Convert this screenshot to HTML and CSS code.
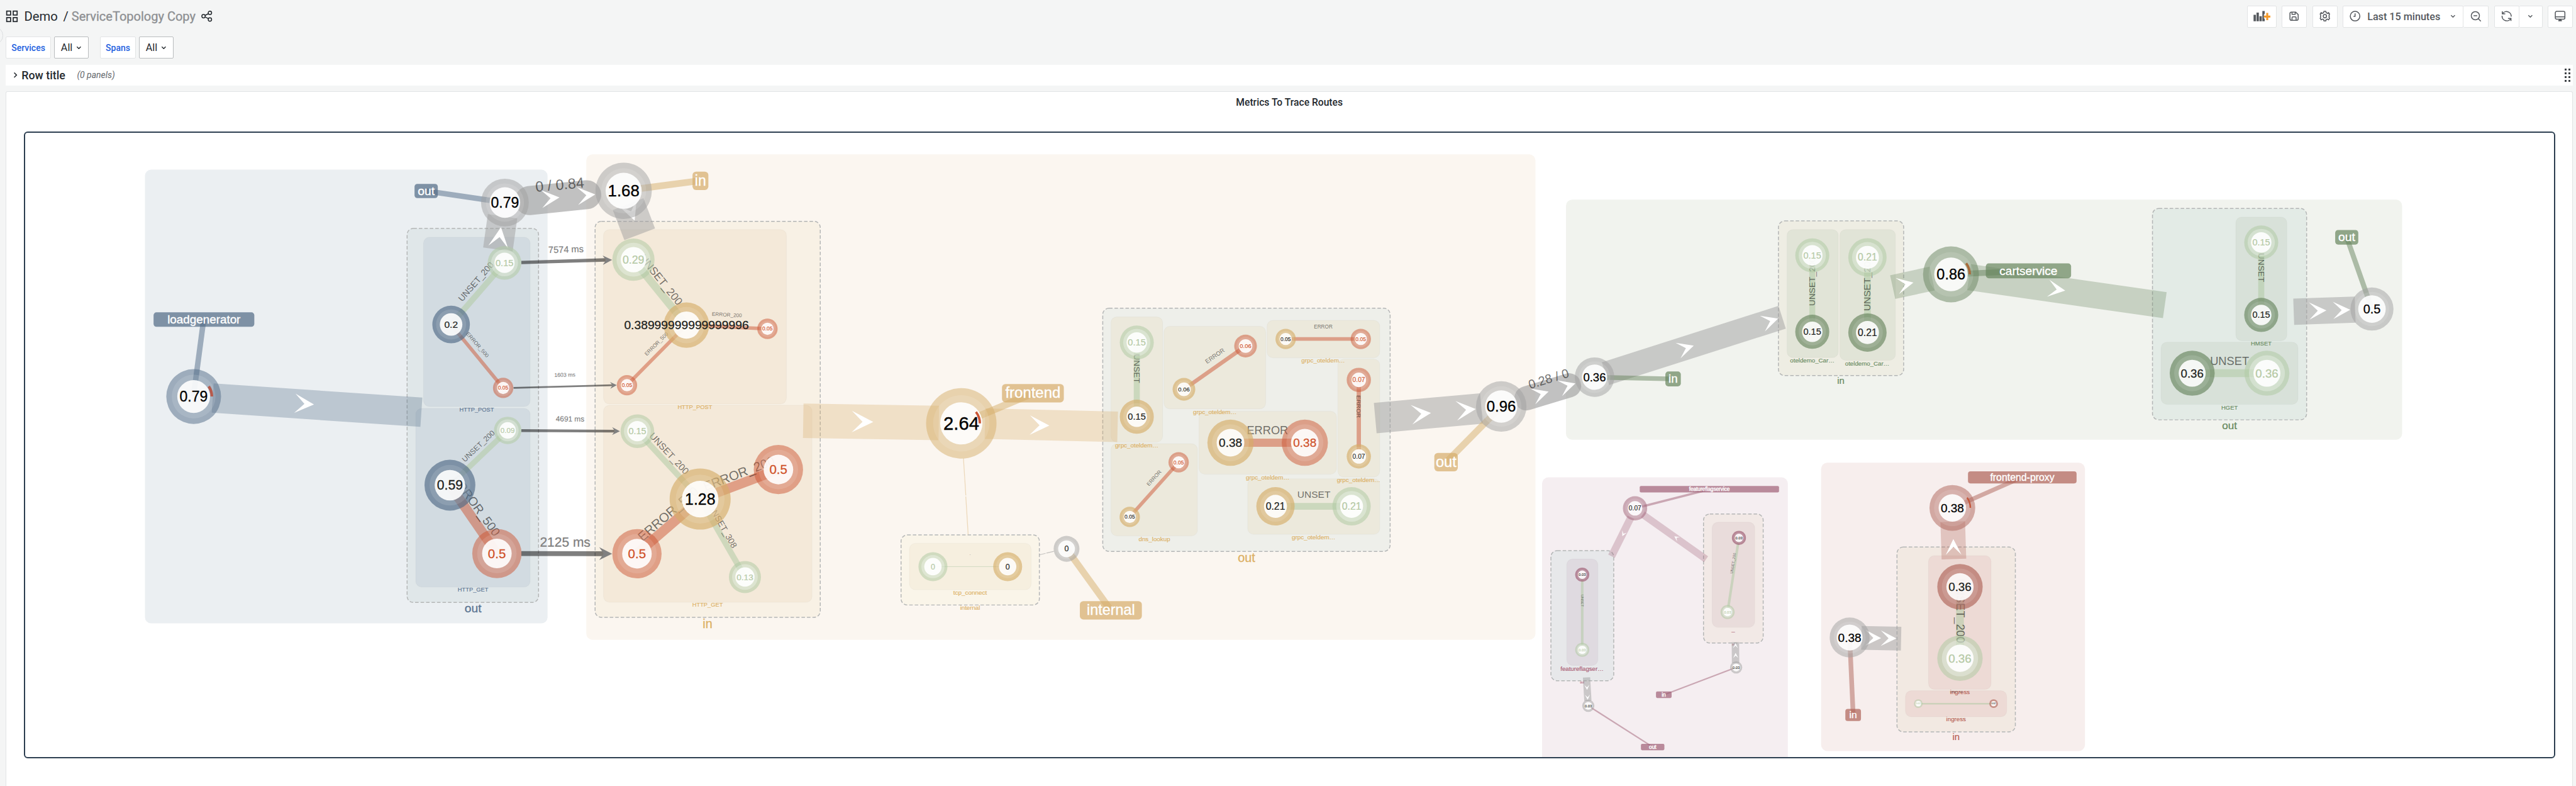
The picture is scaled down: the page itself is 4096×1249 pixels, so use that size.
FILE: index.html
```html
<!DOCTYPE html>
<html lang="en">
<head>
<meta charset="utf-8">
<title>Demo / ServiceTopology Copy</title>
<link rel="stylesheet" href="styles.css">
</head>
<body>
<div class="page">
  <span class="drawer-handle"></span>
  <header class="topbar">
    <svg class="icon icon-apps" viewBox="0 0 24 24"><rect x="2" y="2" width="7.5" height="7.5"/><rect x="14.5" y="2" width="7.5" height="7.5"/><rect x="2" y="14.5" width="7.5" height="7.5"/><rect x="14.5" y="14.5" width="7.5" height="7.5"/></svg>
    <span class="crumb">Demo</span>
    <span class="crumb-sep">/</span>
    <span class="crumb crumb-current">ServiceTopology Copy</span>
    <svg class="icon icon-share" viewBox="0 0 24 24"><circle cx="5" cy="12" r="3.7"/><circle cx="19" cy="4.700" r="3.7"/><circle cx="19" cy="19.300" r="3.7"/><path d="M8.300 10.300l7.400-3.800M8.300 13.700l7.400 3.800"/></svg>
    <div class="tools">
      <button class="tool tool-add"><svg class="icon icon-add" viewBox="0 0 44 28"><path class="bars" d="M0.5 27V10.5h6V27zM8 27V5h6v22zM15.500 27V14h6v13zM23 27V1h6v8h-2v11h2v7z"/><path class="plus" d="M33 5.500h5v7h6v5h-6v6.500h-5v-6.500h-6v-5h6z"/></svg></button>
      <button class="tool"><svg class="icon" viewBox="0 0 24 24"><path d="M3 6a3 3 0 0 1 3-3h9.500L21 8.500V18a3 3 0 0 1-3 3H6a3 3 0 0 1-3-3zM7.500 3v5h7V3M7.500 21v-5.500a2 2 0 0 1 2-2h5a2 2 0 0 1 2 2V21"/></svg></button>
      <button class="tool"><svg class="icon" viewBox="0 0 24 24"><path d="M10 1.500h4l.8 3 2.600 1.100 2.700-1.500 2.200 3.200-1.300 2.600.7 2.100-.7 2.200 1.300 2.500-2.200 3.200-2.700-1.500-2.600 1.100-.8 3h-4l-.8-3-2.600-1.100-2.700 1.500-2.200-3.200L3 14.200 2.300 12 3 9.900 1.700 7.300l2.200-3.200 2.700 1.500 2.600-1.100z"/><circle cx="12" cy="12" r="3.600"/></svg></button>
      <div class="group">
        <button class="tool tool-time"><svg class="icon" viewBox="0 0 24 24"><circle cx="12" cy="12" r="10.500"/><path d="M12 6v6.500H8.500"/></svg><span>Last 15 minutes</span><svg class="icon caret" viewBox="0 0 14 9"><path d="M2 2l5 5 5-5"/></svg></button>
        <button class="tool"><svg class="icon" viewBox="0 0 24 24"><circle cx="11" cy="11" r="9"/><path d="M7 11h8M17.500 17.500L23 23"/></svg></button>
      </div>
      <div class="group">
        <button class="tool"><svg class="icon" viewBox="0 0 24 24"><path d="M2.500 1.500v5.500H9M2.800 7A10.300 10.300 0 0 1 22 13M21.500 22.500V17H15M21.200 17A10.300 10.300 0 0 1 2 11"/></svg></button>
        <button class="tool tool-narrow"><svg class="icon caret" viewBox="0 0 14 9"><path d="M2 2l5 5 5-5"/></svg></button>
      </div>
      <button class="tool"><svg class="icon" viewBox="0 0 24 24"><rect x="1.500" y="1.500" width="21" height="17" rx="3"/><path d="M1.500 13.500h21M10 18.500v2h4v-2M8 22h8"/></svg></button>
    </div>
  </header>

  <div class="variables">
    <div class="variable"><label class="var-name var-services">Services</label><button class="var-value">All<svg class="icon caret" viewBox="0 0 14 9"><path d="M2 2l5 5 5-5"/></svg></button></div>
    <div class="variable"><label class="var-name var-spans">Spans</label><button class="var-value">All<svg class="icon caret" viewBox="0 0 14 9"><path d="M2 2l5 5 5-5"/></svg></button></div>
  </div>

  <div class="dash-row">
    <svg class="icon row-caret" viewBox="0 0 9 14"><path d="M2 2l5 5-5 5"/></svg>
    <span class="row-title">Row title</span>
    <span class="row-count">(0 panels)</span>
    <span class="grip"><i></i><i></i><i></i><i></i><i></i><i></i><i></i><i></i></span>
  </div>

  <section class="panel">
    <h2 class="panel-title">Metrics To Trace Routes</h2>
    <div class="stage"><svg id="graph" class="graph" viewBox="63.800 338.800 6463.400 1594.600" preserveAspectRatio="none"></svg></div>
  </section>
</div>
<script src="graph.js"></script>
</body>
</html>
```
FILE: styles.css
```css
html { font-size: 6.2212px; }
* { box-sizing: border-box; }
body {
  margin: 0;
  background: #f4f5f5;
  color: #24292e;
  font-family: Roboto, "Liberation Sans", sans-serif;
}
.page {
  height: 1249px;
  overflow: hidden;
  position: relative;
  display: flex;
  flex-direction: column;
  padding: 1.4rem .8rem 0 1.5rem;
}
button { font: inherit; color: inherit; margin: 0; }
.drawer-handle {
  position: absolute;
  left: -3.8rem;
  top: 6.8rem;
  width: 4.6rem;
  height: 4.6rem;
  border: 1px solid #dcdee0;
  border-radius: 50%;
}
.icon { fill: none; stroke: currentColor; stroke-width: 2.1; flex: none; width: 2.8rem; height: 2.8rem; }
.caret { width: 1.4rem; height: .9rem; stroke-width: 2.2; }

.topbar { display: flex; align-items: center; height: 5.6rem; flex: none; }
.icon-apps { width: 3.2rem; height: 3.2rem; margin-right: 1.5rem; }
.crumb { font-size: 3.25rem; line-height: 5.6rem; white-space: nowrap; }
.crumb-sep { font-size: 3.25rem; margin: 0 .8rem 0 1.4rem; }
.crumb-current { font-size: 3.22rem; color: #8e9093; -webkit-text-stroke: .35px #8e9093; }
.icon-share { margin-left: 1.5rem; }
.tools { margin-left: auto; display: flex; gap: 1.4rem; color: #55595e; }
.tool {
  display: flex;
  align-items: center;
  justify-content: center;
  width: 6.4rem;
  height: 5.6rem;
  padding: 0;
  background: #fff;
  border: 1px solid #e2e4e5;
  border-radius: 2px;
}
.tool-add { width: 7.4rem; }
.icon-add { width: 4.4rem; height: 2.8rem; stroke: none; }
.bars { fill: #55595e; }
.plus { fill: #f59a2a; }
.group { display: flex; }
.group .tool + .tool { border-left: 0; }
.tool-time {
  width: 30.9rem;
  justify-content: flex-start;
  padding-left: 1.6rem;
  font-size: 2.6rem;
  font-weight: 500;
}
.tool-time span { margin: 0 2.5rem 0 1.7rem; white-space: nowrap; }
.tool-narrow { width: 5.9rem; }

.variables { display: flex; gap: 3rem; margin-top: 2.3rem; height: 5.7rem; flex: none; }
.variable { display: flex; gap: .8rem; }
.var-name, .var-value {
  display: flex;
  align-items: center;
  justify-content: center;
  padding: 0;
  background: #fff;
  border: 1px solid #e2e4e5;
  border-radius: 2px;
}
.var-name { font-size: 2.25rem; font-weight: 500; color: #1f62e0; }
.var-services { width: 11.5rem; }
.var-spans { width: 9.1rem; }
.var-value { border-color: #b9bcbe; font-size: 2.6rem; gap: .9rem; width: 8.8rem; }

.dash-row {
  display: flex;
  align-items: center;
  height: 5.4rem;
  margin-top: 1.5rem;
  padding: 0 .6rem 0 1.900rem;
  background: #fff;
  flex: none;
}
.row-caret { width: 1.1rem; height: 1.700rem; margin-right: 1rem; }
.row-title { font-size: 2.87rem; font-weight: 500; }
.row-count { margin-left: 3rem; font-size: 2.25rem; font-style: italic; color: #63676b; }
.grip { margin-left: auto; display: grid; grid-template-columns: .6rem .6rem; gap: .45rem .35rem; }
.grip i { width: .6rem; height: .5rem; background: #3f4347; }

.panel {
  flex: 1;
  margin-top: 1.4rem;
  background: #fff;
  border: 1px solid #e2e4e5;
  border-bottom: 0;
  border-radius: 3px 3px 0 0;
  padding: 0 4.4rem;
}
.panel-title {
  margin: 0 0 4.5rem;
  height: 5.6rem;
  line-height: 5.6rem;
  text-align: center;
  font-size: 2.52rem;
  font-weight: 500;
}
.stage {
  height: 160.1rem;
  border: 2px solid #2c3e50;
  border-radius: 6px;
  overflow: hidden;
}
.graph {
  display: block;
  width: 100%;
  height: 100%;
  font-family: "Liberation Sans", Arial, sans-serif;
}
.dashed { stroke: #b4b6b6; stroke-width: 2.4; stroke-dasharray: 9 5; }
.op { stroke: rgba(0, 0, 0, .025); stroke-width: 2; }
.edge-label { fill: #000; fill-opacity: .55; }
.chevron { fill: #fff; }
.flow { stroke: #000; stroke-opacity: .5; }
.flow-head { fill: #808080; }
```
FILE: graph.js
```javascript
const svg = document.getElementById('graph');
const NS = 'http://www.w3.org/2000/svg';

const C = {
  load: '#506a85', front: '#d6ad69', cart: '#67845d', flag: '#a06076',
  proxy: '#ae6257', ok: '#b0caa4', err: '#cc5533', io: '#a0a0a0'
};
const TEXT = {
  load: '#5a7391', front: '#dcb064', cart: '#67895d', flag: '#a8566f',
  proxy: '#b75f54', ok: '#b5c9a5', err: '#d0522a'
};

function el(name, attrs, text) {
  const e = document.createElementNS(NS, name);
  for (const k in attrs) e.setAttribute(k, attrs[k]);
  if (text !== undefined) e.textContent = text;
  svg.appendChild(e);
  return e;
}
function rect(x, y, x2, y2, r, fill, cls) {
  el('rect', { x, y, width: x2 - x, height: y2 - y, rx: r, fill, class: cls || '' });
}
function text(x, y, size, str, attrs) {
  const weight = attrs.fill ? { stroke: attrs.fill, 'stroke-width': size * .014 } : {};
  el('text', Object.assign({ x, y, dy: '.35em', 'font-size': size, 'text-anchor': 'middle' }, weight, attrs), str);
}
function line(x1, y1, x2, y2, w, c, o, cap) {
  el('line', { x1, y1, x2, y2, stroke: C[c] || c, 'stroke-width': w, 'stroke-opacity': o, 'stroke-linecap': cap || 'butt' });
}
function chevron(x, y, l, deg) {
  el('path', { class: 'chevron', d: `M0 0L${-l} ${-l / 2}L${-l / 2} 0L${-l} ${l / 2}Z`, transform: `translate(${x} ${y}) rotate(${deg})` });
}

/* Services: x1, y1, x2, y2, fill */
[
  [370, 433, 1399, 1592, '#ebeff2'],
  [1498, 394, 3924, 1634, '#fbf6f0'],
  [4002, 509.5, 6139, 1123, '#f1f3ee'],
  [3941, 1219, 4569, 1950, '#f5eef1'],
  [4654, 1181.5, 5328.5, 1918, '#f7eeed']
].forEach(b => rect(b[0], b[1], b[2], b[3], 16, b[4]));

/* Direction groups */
[
  [1040, 583, 1376, 1538.5, '#e0e7e9'],
  [1520.5, 565, 2096, 1576.5, '#f8f1e5'],
  [2302.5, 1366, 2656, 1545, '#faf5e9'],
  [2818, 787, 3552.5, 1408, '#eeefea'],
  [4545, 564, 4865, 959, '#eeede3'],
  [5501, 532, 5895, 1072, '#e3ebe6'],
  [3963.5, 1406, 4124, 1738.5, '#e7e8ea'],
  [4353.5, 1312.5, 4506, 1642, '#f2e9e6'],
  [4848, 1397, 5150.5, 1869, '#f2e9e2']
].forEach(b => rect(b[0], b[1], b[2], b[3], 16, b[4], 'dashed'));

/* Operations */
[
  [1082, 605.5, 1354.5, 1038, '#d2dbe1'], [1062, 1043, 1354.5, 1499, '#d2dbe1'],
  [1542, 586, 2009.5, 1031.5, '#f4e9d9'], [1542, 1035, 2075, 1538, '#f4e9d9'],
  [2324, 1387.5, 2635, 1506, '#f6efdf'],
  [2839, 809, 2971, 1129, '#ece9dc'], [2974.5, 833, 3234.5, 1044, '#ece9dc'],
  [3238, 818, 3526, 913.5, '#ece9dc'], [3419, 917, 3526, 1218, '#ece9dc'],
  [3064, 1050, 3415.5, 1211, '#ece9dc'], [2839, 1133, 3060, 1368.5, '#ece9dc'],
  [3188.5, 1222.5, 3526, 1364.5, '#ece9dc'],
  [4567, 586, 4698, 913, '#e1e4d7'], [4702, 586, 4844, 920, '#e1e4d7'],
  [5714, 554, 5844.5, 870, '#d8e1d9'], [5523, 873.5, 5873, 1032.5, '#d8e1d9'],
  [4004, 1427.5, 4083.5, 1699.5, '#dfdae0'], [4375.5, 1333.5, 4484.5, 1602, '#e9dcdb'],
  [4928.5, 1419, 5088.5, 1760.5, '#eddad5'], [4869.5, 1764, 5128.5, 1830.5, '#eddad5']
].forEach(b => rect(b[0], b[1], b[2], b[3], 15, b[4], 'op'));

/* Captions: x, y, size, text, colour */
[
  [1218, 1046, 15, 'HTTP_POST', 'load'], [1208.5, 1506, 15, 'HTTP_GET', 'load'], [1208.5, 1553.5, 31, 'out', 'load'],
  [1775.5, 1039, 15, 'HTTP_POST', 'front'], [1808, 1544.5, 15, 'HTTP_GET', 'front'], [1808, 1593, 32, 'in', 'front'],
  [2479, 1513, 16, 'tcp_connect', 'front'], [2479, 1552.5, 15.6, 'internal', 'front'],
  [2905, 1137, 15.8, 'grpc_oteldem…', 'front'], [3104.5, 1052, 15.8, 'grpc_oteldem…', 'front'],
  [3381.5, 920.5, 15.8, 'grpc_oteldem…', 'front'], [3472, 1226, 15.8, 'grpc_oteldem…', 'front'],
  [3239.5, 1218.500, 15.8, 'grpc_oteldem…', 'front'], [3357, 1371.5, 15.8, 'grpc_oteldem…', 'front'],
  [2950, 1376, 15.8, 'dns_lookup', 'front'], [3185.5, 1424, 32, 'out', 'front'],
  [4631.5, 920, 15.6, 'oteldemo_Car…', 'cart'], [4772, 927.5, 15.6, 'oteldemo_Car…', 'cart'], [4704.5, 971, 24, 'in', 'cart'],
  [5779, 877.5, 15.2, 'HMSET', 'cart'], [5698, 1040.500, 15.2, 'HGET', 'cart'], [5698, 1086, 27.5, 'out', 'cart'],
  [4043, 1707, 15.5, 'featureflagser…', 'flag'], [4043.5, 1742.5, 7.8, 'out', 'flag'],
  [4429.5, 1606, 15.5, '_', 'flag'], [4429.5, 1645.5, 7.8, 'in', 'flag'],
  [5009, 1767.5, 15.7, 'ingress', 'proxy'], [4999, 1837, 15.7, 'ingress', 'proxy'], [4999, 1881, 24, 'in', 'proxy']
].forEach(t => text(t[0], t[1], t[2], t[3], { fill: TEXT[t[4]] }));

/* Traffic bands */
line(543, 1016.5, 1076.5, 1052.5, 75, 'load', .3);
line(1272, 637, 1284, 552, 76, 'io', .5);
line(1605, 521, 1634.5, 598, 84, 'io', .5);
line(1352, 512, 1499, 497, 74, 'io', .65, 'round');
line(2052.5, 1074.5, 2399, 1080, 88, 'front', .3);
line(2517, 1082, 2856, 1090, 78, 'front', .3);
line(3514.5, 1067.5, 3786, 1043, 78, 'io', .5);
line(3901, 1017, 4010, 984, 62, 'io', .65, 'round');
line(4103, 954, 4554.5, 810, 61, 'io', .5);
line(4837, 733, 4938, 711, 62, 'cart', .3);
line(5032, 707.5, 5532.5, 779, 67, 'cart', .3);
line(5862, 796, 6019, 790.5, 67, 'io', .5);
line(4168, 1321, 4118.5, 1420.5, 19, 'flag', .3);
line(4198.5, 1314, 4360, 1428, 18, 'flag', .3);
line(4054.500, 1730, 4058, 1790, 18.5, 'io', .5);
line(4435.5, 1693.5, 4435, 1640, 19, 'io', .5);
line(4993.5, 1427.5, 4990.5, 1332, 63, 'proxy', .3);
line(4757, 1629, 4858.5, 1631, 61, 'io', .5);

/* Leader lines to the name tags */
line(494, 1012, 520, 816, 14, 'load', .5);
line(1290, 517, 1089, 487.5, 14, 'load', .5);
line(1593, 487, 1790, 461, 17, 'front', .5);
line(2457, 1081, 2640, 1004, 18, 'front', .5);
line(2725.5, 1401.5, 2838.5, 1558, 17, 'front', .5);
line(3836.5, 1038, 3696, 1180, 17, 'front', .5);
line(4075, 963, 4276, 967.5, 12, 'cart', .5);
line(4986, 700.5, 5184, 691.5, 15, 'cart', .5);
line(6062, 789, 5997.5, 606, 13, 'cart', .5);
line(4178.500, 1298, 4368.5, 1249.5, 5.500, 'flag', .5);
line(4437, 1704.500, 4252, 1774.5, 3.5, 'flag', .5);
line(4059, 1802.5, 4223.5, 1907.5, 3.5, 'flag', .5);
line(4989.5, 1297, 5168, 1218.5, 11, 'proxy', .5);
line(4727, 1628, 4736, 1825.5, 12, 'proxy', .5);
line(2462, 1170, 2468, 1265, 2, 'front', .4);
line(2468, 1268, 2474, 1365, 2, 'front', .4);
line(2656, 1417, 2672, 1413, 2, 'io', .6);
line(2674, 1412.500, 2693, 1408, 2, 'io', .6);

/* Span links: x1, y1, x2, y2, width, status */
[
  [1152, 828.5, 1289, 671, 15, 'ok'], [1152, 828.5, 1285.5, 990.5, 9, 'err'],
  [1149.5, 1239, 1297, 1099, 14, 'ok'], [1149.5, 1239, 1269.5, 1413.5, 25, 'err'],
  [1618.5, 663, 1754, 830, 20, 'ok'], [1754, 830, 1961, 839.5, 9, 'err'], [1754, 830, 1602, 983.5, 9, 'err'],
  [1628.5, 1101, 1789, 1274.5, 15, 'ok'], [1789, 1274.5, 1989, 1199, 25, 'err'],
  [1789, 1274.5, 1627.5, 1414, 25, 'err'], [1789, 1274.5, 1903.5, 1473.5, 15, 'ok'],
  [2384, 1447, 2575, 1447, 1.5, 'ok'],
  [2905, 874.5, 2905, 1064, 15.5, 'ok'], [3025.5, 994, 3183, 883.5, 10, 'err'],
  [3285.5, 865.5, 3477.5, 865.5, 9, 'err'], [3472.500, 970, 3472.500, 1165.5, 11, 'err'],
  [3144.5, 1130.5, 3334.5, 1130.5, 21, 'err'], [3012, 1180.5, 2887, 1320, 9, 'err'],
  [3259.500, 1293, 3454, 1293, 17, 'ok'],
  [4631.5, 652, 4631.5, 847, 15, 'ok'], [4772.5, 657, 4772.5, 849, 17, 'ok'],
  [5779, 619, 5779, 804, 15.5, 'ok'], [5602.500, 953, 5793.500, 953, 20, 'ok'],
  [4043.5, 1467.5, 4043.5, 1659.5, 6.500, 'ok'], [4444, 1373.5, 4415, 1563, 6.500, 'ok'],
  [5009, 1498.5, 5009, 1681, 20, 'ok'], [4902.5, 1797, 5095, 1797, 4, 'ok']
].forEach(l => line(l[0], l[1], l[2], l[3], l[4], l[5], l[5] === 'ok' ? .55 : .5));

/* Link labels: x, y, size, angle, text */
[
  [1216, 719, 22.3, -49, 'UNSET_200'], [1220, 880, 13.8, 49, 'ERROR_500'],
  [1222, 1139, 19, -43.5, 'UNSET_200'], [1217, 1291, 31.5, 54, 'ERROR_500'],
  [1689, 714, 28, 51, 'UNSET_200'], [1857.5, 803.5, 13.2, 2.7, 'ERROR_200'], [1677, 878, 13.5, -45, 'ERROR_500'],
  [1710, 1158, 24, 47, 'UNSET_200'], [1888, 1209, 33, -20.7, 'ERROR_200'],
  [1707, 1312, 33, -40.8, 'ERROR_500'], [1847, 1344, 22, 60, 'UNSET_308'],
  [2479, 1417, 8, 0, '-'],
  [2906, 941, 22, 90, 'UNSET'], [3104.5, 908.5, 15.5, -35, 'ERROR'], [3381.5, 834.5, 13.2, 0, 'ERROR'],
  [3473, 1038, 16, 90, 'ERROR'], [3239, 1099, 29.3, 0, 'ERROR'], [2949, 1220.5, 13.5, -48, 'ERROR'],
  [3357.5, 1262.500, 25, 0, 'UNSET'],
  [4631, 719, 22, -90, 'UNSET_200'], [4772, 724, 25, -90, 'UNSET_200'],
  [5780, 683, 22, 90, 'UNSET'], [5698, 921, 29.4, 0, 'UNSET'],
  [4044, 1534, 9.2, 90, 'UNSET'], [4429, 1438.5, 9.5, -81, 'UNSET_200'],
  [5011, 1560, 29.3, 90, 'UNSET_200'], [4999.5, 1767, 5.7, 0, 'UNSET_200'],
  [1430, 471, 37.5, -5, '0 / 0.84'], [3957.5, 967, 32, -17, '0.28 / 0']
].forEach(t => text(0, 0, t[2], t[4], { class: 'edge-label', transform: `translate(${t[0]} ${t[1]}) rotate(${t[3]})` }));

/* Direction chevrons: tip x, tip y, length, angle */
[
  [802, 1033, 49, 4], [1280, 580, 51, -82], [1429.5, 504, 46, -5], [1521, 496.5, 46, -5], [1621.5, 563, 50, 69],
  [2231.5, 1077.5, 55, 1], [2681.5, 1086.5, 50, 1.3],
  [3657, 1054.5, 50, -5], [3771.5, 1044.5, 50, -5], [3957.5, 1000, 42, -17], [4026, 979, 42, -17],
  [4328.5, 882.5, 42, -17.5], [4544, 813.500, 42, -17.5], [4890, 721.5, 42, -12], [5278, 742, 44, 8],
  [5945.5, 792.5, 44, -2], [6006.5, 791, 44, -2],
  [4146, 1369, 13, 116], [4279, 1369.5, 13, -145],
  [4056, 1762, 13, 87], [4057.5, 1787, 13, 87], [4435, 1642.5, 13, -91], [4435.5, 1667.5, 13, -91],
  [4992, 1376.5, 40, -91], [4807.5, 1629.5, 40, 1], [4846.5, 1630.5, 40, 1]
].forEach(c => chevron(...c));

/* Calls between services: x1, y1, x2, y2, width, head length, label x, label y, size, label */
[
  [1332, 670, 1564, 663.500, 8.5, 24, 1446, 636.500, 23.5, '7574 ms'],
  [1312, 990.5, 1576, 983.5, 4.500, 17, 1443, 957, 14, '1603 ms'],
  [1332, 1099.5, 1584, 1101, 7, 20, 1456.5, 1069.500, 19, '4691 ms'],
  [1332, 1413.5, 1564, 1414, 12.5, 33, 1444, 1384, 33.7, '2125 ms']
].forEach(([x1, y1, x2, y2, w, h, lx, ly, size, label]) => {
  const a = Math.atan2(y2 - y1, x2 - x1) * 180 / Math.PI;
  el('line', { class: 'flow', x1, y1, x2: x2 - h * .65, y2, 'stroke-width': w });
  el('path', { class: 'flow-head', d: `M0 0L${-h} ${-h / 2}L${-h * .65} 0L${-h} ${h / 2}Z`, transform: `translate(${x2} ${y2}) rotate(${a})` });
  text(0, 0, size, label, { fill: '#808080', transform: `translate(${lx} ${ly}) rotate(${a})` });
});

/* Nodes: x, y, radius, colour, ring opacity, core ratio, value, size, value colour */
const K = '#000', D = '#1d1f20';
[
  [494.5, 1012.5, 70, 'load', .5, .6, '0.79', 37, K],
  [1290, 517, 61, 'io', .5, .64, '0.79', 37, K],
  [1289, 671, 43, 'ok', .55, .6, '0.15', 23.5],
  [1152.5, 828.5, 48, 'load', .65, .6, '0.2', 25, D],
  [1285.5, 990.5, 26, 'err', .5, .6, '0.05', 13.7],
  [1297, 1099, 35, 'ok', .55, .6, '0.09', 18.7],
  [1149.5, 1239, 65, 'load', .65, .6, '0.59', 34, D],
  [1269.5, 1413.5, 63, 'err', .5, .6, '0.5', 33],
  [1593.5, 487, 72, 'io', .5, .64, '1.68', 41.5, K],
  [1618.5, 663, 54, 'ok', .55, .6, '0.29', 28.5],
  [1961, 839.5, 26, 'err', .5, .6, '0.05', 13.7],
  [1602, 983.5, 26, 'err', .5, .6, '0.05', 13.7],
  [1754, 830, 58, 'front', .65, .6, '0.38999999999999996', 31, D],
  [1628.5, 1101, 43, 'ok', .55, .6, '0.15', 23.2],
  [1989, 1199, 63, 'err', .5, .6, '0.5', 33],
  [1627.5, 1414, 63, 'err', .5, .6, '0.5', 33],
  [1789, 1274.5, 78, 'front', .65, .6, '1.28', 40, K],
  [1903.5, 1473.5, 41, 'ok', .55, .6, '0.13', 22],
  [2456.5, 1081, 90, 'front', .5, .6, '2.64', 47, K],
  [2384, 1447, 37, 'ok', .55, .6, '0', 20],
  [2575, 1447, 37, 'front', .65, .6, '0', 20, D],
  [2725.5, 1401.5, 33, 'io', .5, .65, '0', 20, D],
  [2905, 874.5, 43.5, 'ok', .55, .6, '0.15', 23.5],
  [2905, 1064, 43.5, 'front', .65, .6, '0.15', 23.5, D],
  [3025.5, 994, 29, 'front', .65, .6, '0.06', 15.3, D],
  [3183, 883.5, 29, 'err', .5, .6, '0.06', 15.3],
  [3285.5, 865.5, 26, 'front', .65, .6, '0.05', 13.8, D],
  [3477.5, 865.5, 26, 'err', .5, .6, '0.05', 13.8],
  [3472.5, 970, 31, 'err', .5, .6, '0.07', 16.5],
  [3472.5, 1165.5, 31, 'front', .65, .6, '0.07', 16.5, D],
  [3144.5, 1130.5, 59, 'front', .65, .6, '0.38', 30.5, D],
  [3334.5, 1130.5, 59, 'err', .5, .6, '0.38', 30.5],
  [3012, 1180.5, 26, 'err', .5, .6, '0.05', 13.8],
  [2887, 1320, 26, 'front', .65, .6, '0.05', 13.8, D],
  [3259.5, 1293, 49, 'front', .65, .6, '0.21', 25.5, D],
  [3454, 1293, 49, 'ok', .55, .6, '0.21', 25.5],
  [3836.5, 1038, 64.5, 'io', .5, .64, '0.96', 38.5, K],
  [4075, 963, 50.5, 'io', .5, .64, '0.36', 29.7, K],
  [4631.5, 652, 43.5, 'ok', .55, .6, '0.15', 23.3],
  [4631.5, 847, 43.5, 'cart', .65, .6, '0.15', 23.3, D],
  [4772.5, 657, 49, 'ok', .55, .6, '0.21', 25.3],
  [4772.5, 849, 49, 'cart', .65, .6, '0.21', 25.3, D],
  [4986, 700.5, 71.5, 'cart', .5, .6, '0.86', 37.7, K],
  [5779, 619, 43.5, 'ok', .55, .6, '0.15', 23.3],
  [5779, 804, 43.5, 'cart', .65, .6, '0.15', 23.3, D],
  [5602.5, 953, 57.5, 'cart', .65, .6, '0.36', 30, D],
  [5793.5, 953, 57.5, 'ok', .55, .6, '0.36', 30],
  [6062, 789, 55, 'io', .5, .64, '0.5', 32, K],
  [4178.5, 1298, 31, 'flag', .5, .6, '0.07', 16.5, D],
  [4043.5, 1467.5, 18, 'flag', .7, .6, '0.03', 9.6, D],
  [4043.5, 1659.5, 18, 'ok', .55, .6, '0.03', 9.6],
  [4059, 1802.5, 15.5, 'io', .5, .64, '0.03', 9.6, D],
  [4444, 1373.5, 18, 'flag', .7, .6, '0.03', 9.6, D],
  [4415, 1563, 18, 'ok', .55, .6, '0.03', 9.6],
  [4437, 1704.5, 15.5, 'io', .5, .64, '0.03', 9.6, D],
  [4989.5, 1297, 58.5, 'proxy', .5, .6, '0.38', 30.5, K],
  [5009, 1498.5, 58, 'proxy', .65, .6, '0.36', 30.2, D],
  [5009, 1681, 58, 'ok', .55, .6, '0.36', 30.2],
  [4902.5, 1797, 11, 'ok', .55, .6, '0.02', 5.7],
  [5095, 1797, 11, 'proxy', .65, .6, '0.02', 5.7, D],
  [4727, 1628, 51, 'io', .5, .65, '0.38', 30.5, K]
].forEach(([x, y, r, c, o, k, value, size, fill]) => {
  el('circle', { cx: x, cy: y, r, fill: C[c], 'fill-opacity': o });
  el('circle', { cx: x, cy: y, r: r * .8, fill: '#fff', 'fill-opacity': c === 'ok' ? .3 : .12 });
  el('circle', { cx: x, cy: y, r: r * k, fill: '#fff', 'fill-opacity': .9 });
  text(x, y, size, value, { fill: fill || TEXT[c] });
});

/* Error share arcs: centre, radius, width, start angle, colour */
[
  [494.5, 1012.5, 46.5, 7, 34, '#b65a4c'],
  [2456.5, 1081, 47.5, 6, 38, '#cc5533'],
  [4986, 700.5, 48, 6, 36, '#a86a3a'],
  [4989.5, 1297, 46, 4, 35, '#c4583c']
].forEach(([x, y, r, w, deg, stroke]) => {
  const a = deg * Math.PI / 180;
  el('path', { d: `M${x + r * Math.cos(a)} ${y - r * Math.sin(a)}A${r} ${r} 0 0 1 ${x + r} ${y}`, fill: 'none', stroke, 'stroke-width': w });
});

/* Name tags: x1, y1, x2, y2, colour, text, size */
[
  [392, 797.5, 649.5, 834.5, 'load', 'loadgenerator', 30.3],
  [1059, 469.5, 1118.5, 505.5, 'load', 'out', 31],
  [1769.5, 438, 1810, 485, 'front', 'in', 37],
  [2560.5, 980.5, 2718.5, 1027.5, 'front', 'frontend', 38.5],
  [2759.5, 1535, 2918, 1582, 'front', 'internal', 37.5],
  [3665.5, 1156.5, 3725.5, 1203.5, 'front', 'out', 38],
  [4256, 948.5, 4295.5, 986.5, 'cart', 'in', 30],
  [5075, 672.5, 5293, 710.5, 'cart', 'cartservice', 30.7],
  [5968, 587, 6027, 624.5, 'cart', 'out', 31],
  [4190.5, 1241, 4546.5, 1257.5, 'flag', 'featureflagservice', 13.2],
  [4232, 1766, 4272, 1782.5, 'flag', 'in', 13.7],
  [4193.5, 1899.5, 4253.5, 1916, 'flag', 'out', 13.7],
  [5029.5, 1203.5, 5307, 1234.5, 'proxy', 'frontend-proxy', 25.5],
  [4716, 1810.5, 4756, 1841.5, 'proxy', 'in', 25]
].forEach(([x, y, x2, y2, c, str, size]) => {
  el('rect', { x, y, width: x2 - x, height: y2 - y, rx: Math.min(9, (y2 - y) / 5), fill: C[c], 'fill-opacity': .7 });
  text((x + x2) / 2, (y + y2) / 2 - size * .03, size, str, { fill: '#fff', 'stroke-width': .6 });
});
```
